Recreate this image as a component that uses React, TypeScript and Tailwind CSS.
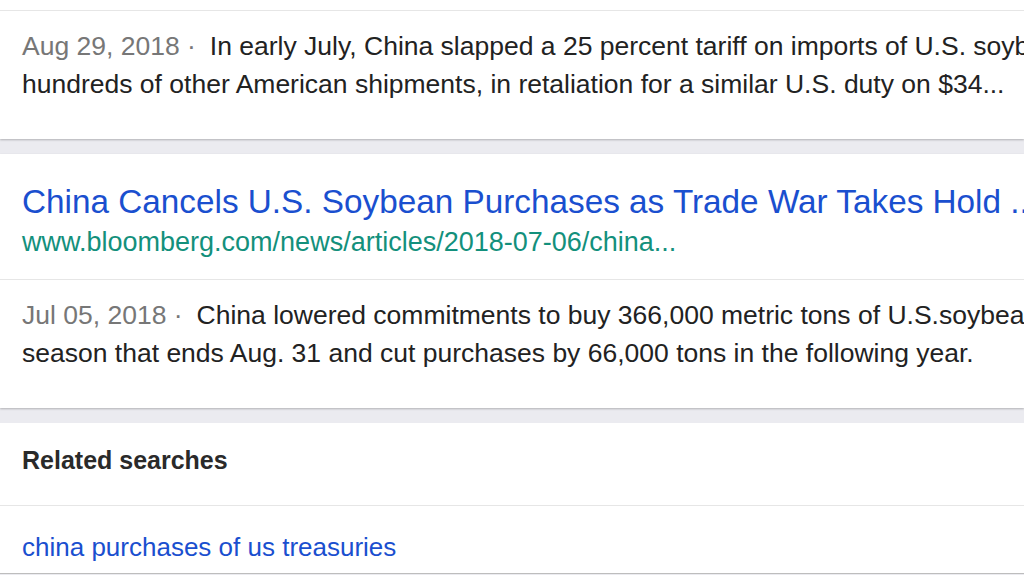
const font = "font-['Liberation_Sans',Arial,sans-serif]";

function Snippet({ date, lines }: { date: string; lines: string[] }) {
  return (
    <div className="pl-[22px] pt-[16px] pb-[36px] text-[26.5px] leading-[38px] text-[#222] overflow-hidden">
      <div className="whitespace-nowrap">
        <span className="text-[#777]">{date} ·</span>
        <span className="ml-[14px]">{lines[0]}</span>
      </div>
      <div className="whitespace-nowrap">{lines[1]}</div>
    </div>
  );
}

export default function App() {
  return (
    <div className={`${font} w-[1024px] h-[575px] overflow-hidden bg-[#ebebf0]`}>
      {/* Card 1 (tail of a result) */}
      <div className="bg-white shadow-[0_1px_2px_rgba(0,0,0,0.25)]">
        <div className="h-[11px] border-b border-[#e6e6e6]" />
        <Snippet
          date="Aug 29, 2018"
          lines={[
            'In early July, China slapped a 25 percent tariff on imports of U.S. soybeans and',
            'hundreds of other American shipments, in retaliation for a similar U.S. duty on $34...',
          ]}
        />
      </div>

      {/* Card 2 */}
      <div className="mt-[15px] bg-white shadow-[0_1px_2px_rgba(0,0,0,0.25)]">
        <div className="pl-[22px] pt-[28px] pb-[17px] border-b border-[#e6e6e6] whitespace-nowrap overflow-hidden">
          <div className="text-[33.3px] leading-[40px] text-[#1a4fcf]">
            China Cancels U.S. Soybean Purchases as Trade War Takes Hold ...
          </div>
          <div className="text-[27px] leading-[40px] text-[#13907c]">
            www.bloomberg.com/news/articles/2018-07-06/china...
          </div>
        </div>
        <Snippet
          date="Jul 05, 2018"
          lines={[
            'China lowered commitments to buy 366,000 metric tons of U.S.soybeans for the',
            'season that ends Aug. 31 and cut purchases by 66,000 tons in the following year.',
          ]}
        />
      </div>

      {/* Related searches */}
      <div className="mt-[15px] bg-white">
        <div className="pl-[22px] pt-[21px] pb-[29px] border-b border-[#e6e6e6] text-[25px] leading-[32px] font-bold text-[#2a2a2a]">
          Related searches
        </div>
        <div className="pl-[22px] pt-[25px] pb-[10px] border-b border-[#bdbdbd] text-[26px] leading-[32px] text-[#1a4fcf]">
          china purchases of us treasuries
        </div>
      </div>
    </div>
  );
}
